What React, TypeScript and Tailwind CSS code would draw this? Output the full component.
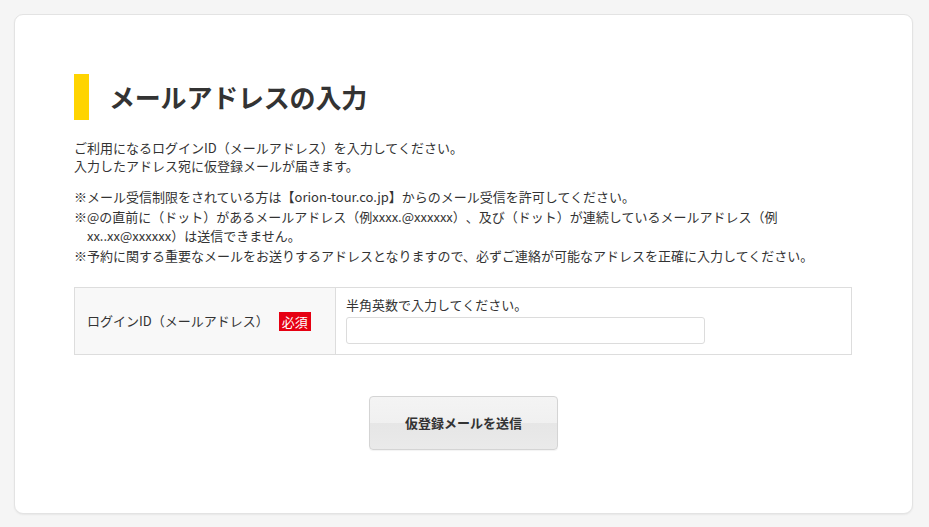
import React from "react";

export default function App() {
  return (
    <div className="w-[929px] h-[527px] bg-[#f5f5f5] pt-[14px] pl-[14px] overflow-hidden">
      <div
        className="w-[899px] h-[500px] bg-white border border-[#e3e3e3] rounded-[9px] shadow-[0_1px_2px_rgba(0,0,0,0.06)] pt-[59px] px-[59px] text-[#333] text-[13px] [text-spacing-trim:space-all]"
        style={{ fontFamily: '"Noto Sans CJK JP", "Noto Sans", sans-serif' }}
      >
        <div className="flex items-center h-[46px]">
          <div className="w-[15px] h-[46px] bg-[#ffd400]" />
          <h1 className="ml-[20px] text-[26px] font-bold leading-none tracking-[-0.2px] text-[#333]">
            メールアドレスの入力
          </h1>
        </div>

        <div className="mt-[19px] leading-[18px]">
          <p>ご利用になるログインID（メールアドレス）を入力してください。</p>
          <p>入力したアドレス宛に仮登録メールが届きます。</p>
        </div>

        <div className="mt-[12px] leading-[19.5px]">
          <p>※メール受信制限をされている方は【orion-tour.co.jp】からのメール受信を許可してください。</p>
          <p className="pl-[13px] -indent-[13px] w-[730px]">
            ※@の直前に（ドット）があるメールアドレス（例xxxx.@xxxxxx）、及び（ドット）が連続しているメールアドレス（例xx..xx@xxxxxx）は送信できません。
          </p>
          <p>※予約に関する重要なメールをお送りするアドレスとなりますので、必ずご連絡が可能なアドレスを正確に入力してください。</p>
        </div>

        <div className="mt-[22px] flex w-[778px] h-[68px] border border-[#dddddd]">
          <div className="w-[261px] bg-[#f8f8f8] border-r border-[#dddddd] flex items-center pl-[12px]">
            <span>ログインID（メールアドレス）</span>
            <span className="ml-[10px] bg-[#e60012] text-white text-[13px] leading-[19px] px-[3px] h-[19px]">
              必須
            </span>
          </div>
          <div className="flex-1 pl-[10px] pt-[8px]">
            <p className="leading-[18px]">半角英数で入力してください。</p>
            <input
              type="text"
              className="mt-[3px] w-[359px] h-[27px] border border-[#dcdcdc] rounded-[3px] bg-white outline-none"
            />
          </div>
        </div>

        <div className="mt-[41px] flex justify-center">
          <button className="w-[189px] h-[54px] rounded-[4px] border border-[#d4d4d4] bg-[linear-gradient(to_bottom,#f4f4f4_0%,#f0f0f0_50%,#e6e6e6_51%,#eaeaea_100%)] text-[13px] font-bold text-[#333] shadow-[0_1px_1px_rgba(0,0,0,0.05)]">
            仮登録メールを送信
          </button>
        </div>
      </div>
    </div>
  );
}
